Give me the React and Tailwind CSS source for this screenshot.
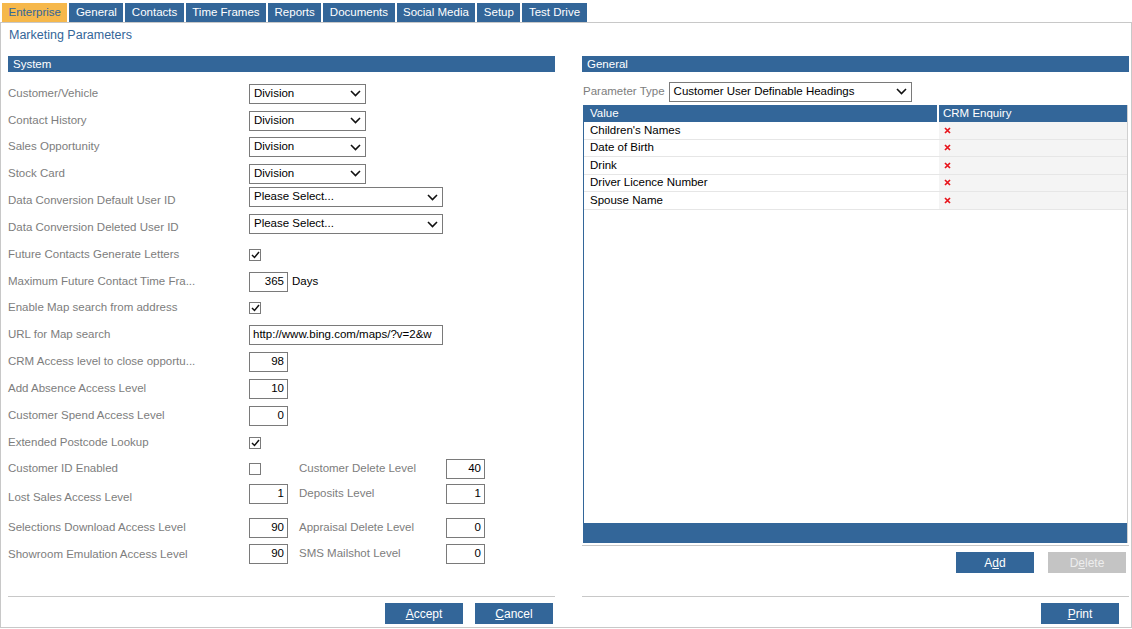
import { Fragment } from 'react'

const tabs = ['Enterprise', 'General', 'Contacts', 'Time Frames', 'Reports', 'Documents', 'Social Media', 'Setup', 'Test Drive']

const rows = [
  { label: 'Customer/Vehicle', kind: 'select', value: 'Division', h: 'h-[27px]' },
  { label: 'Contact History', kind: 'select', value: 'Division', h: 'h-[27px]' },
  { label: 'Sales Opportunity', kind: 'select', value: 'Division', h: 'h-[26px]' },
  { label: 'Stock Card', kind: 'select', value: 'Division', h: 'h-[27px]' },
  { label: 'Data Conversion Default User ID', kind: 'wide', value: 'Please Select...', h: 'h-[27px]', up: true },
  { label: 'Data Conversion Deleted User ID', kind: 'wide', value: 'Please Select...', h: 'h-[27px]', up: true },
  { label: 'Future Contacts Generate Letters', kind: 'check', checked: true, h: 'h-[27px]' },
  { label: 'Maximum Future Contact Time Fra...', kind: 'days', value: '365', h: 'h-[27px]' },
  { label: 'Enable Map search from address', kind: 'check', checked: true, h: 'h-[26px]' },
  { label: 'URL for Map search', kind: 'url', value: 'http://www.bing.com/maps/?v=2&w', h: 'h-[27px]' },
  { label: 'CRM Access level to close opportu...', kind: 'num', value: '98', h: 'h-[27px]' },
  { label: 'Add Absence Access Level', kind: 'num', value: '10', h: 'h-[27px]' },
  { label: 'Customer Spend Access Level', kind: 'num', value: '0', h: 'h-[27px]' },
  { label: 'Extended Postcode Lookup', kind: 'check', checked: true, h: 'h-[27px]' },
]

const pairRows = [
  { label: 'Customer ID Enabled', kind: 'check', checked: false, label2: 'Customer Delete Level', value2: '40', h: 'h-[25px]', lp: '' },
  { label: 'Lost Sales Access Level', kind: 'num', value: '1', label2: 'Deposits Level', value2: '1', h: 'h-[26px]', lp: 'pt-[8px]' },
  { label: 'Selections Download Access Level', kind: 'num', value: '90', label2: 'Appraisal Delete Level', value2: '0', h: 'h-[27px] mt-[7px]', lp: 'pt-[1px]' },
  { label: 'Showroom Emulation Access Level', kind: 'num', value: '90', label2: 'SMS Mailshot Level', value2: '0', h: 'h-[25px]', lp: 'pt-[3px]' },
]

const values = ["Children's Names", 'Date of Birth', 'Drink', 'Driver Licence Number', 'Spouse Name']

function Chevron() {
  return (
    <svg width="11" height="7" viewBox="0 0 11 7" className="shrink-0">
      <path d="M1 1 L5.5 5.5 L10 1" fill="none" stroke="#111" strokeWidth="1.6" />
    </svg>
  )
}

function Select({ value, width }) {
  return (
    <div className={`${width} h-[20px] border border-[#7a7a7a] bg-white flex items-center justify-between pl-[4px] pr-[4px] text-black`}>
      <span className="leading-none">{value}</span>
      <Chevron />
    </div>
  )
}

function Check({ checked }) {
  return (
    <div className="w-[12px] h-[12px] border border-[#7a7a7a] bg-white flex items-center justify-center">
      {checked && (
        <svg width="9" height="8" viewBox="0 0 9 8">
          <path d="M1 4 L3.5 6.5 L8 1" fill="none" stroke="#111" strokeWidth="1.5" />
        </svg>
      )}
    </div>
  )
}

function Num({ value }) {
  return (
    <div className="w-[39px] h-[20px] border border-[#7a7a7a] bg-white flex items-center justify-end pr-[3px] text-black leading-none">
      {value}
    </div>
  )
}

function Control({ row }) {
  if (row.kind === 'select') return <Select value={row.value} width="w-[117px]" />
  if (row.kind === 'wide') return <Select value={row.value} width="w-[194px]" />
  if (row.kind === 'check') return <Check checked={row.checked} />
  if (row.kind === 'num') return <Num value={row.value} />
  if (row.kind === 'days')
    return (
      <div className="flex items-center gap-[4px]">
        <Num value={row.value} />
        <span className="text-black">Days</span>
      </div>
    )
  return (
    <div className="w-[194px] h-[20px] border border-[#7a7a7a] bg-white flex items-center pl-[3px] text-black leading-none whitespace-nowrap">
      {row.value}
    </div>
  )
}

function Button({ children, className = 'bg-[#336699] text-white' }) {
  return (
    <button className={`w-[78px] h-[21px] ${className} text-[12px] leading-none flex items-center justify-center`}>
      {children}
    </button>
  )
}

function RedX() {
  return (
    <svg width="7" height="7" viewBox="0 0 7 7">
      <path d="M1 1 L6 6 M6 1 L1 6" stroke="#e8141b" strokeWidth="1.7" />
    </svg>
  )
}

export default function App() {
  return (
    <div className="w-[1132px] h-[629px] bg-white font-['Liberation_Sans',Arial,sans-serif] text-[11.5px] overflow-hidden">
      <div className="flex h-[22px] pt-[3px] pl-[2px] gap-[2px]">
        {tabs.map((tab, i) => (
          <div
            key={tab}
            className={`h-[19px] px-[6.5px] pt-[1px] flex items-center leading-none ${i === 0 ? 'bg-[#f6b84b] text-[#336699]' : 'bg-[#336699] text-white'}`}
          >
            {tab}
          </div>
        ))}
      </div>

      <div className="h-[606px] border border-[#c8c8c8] pl-[7px] pr-[1px]">
        <div className="h-[33px] pt-[4px] pl-[1px] text-[12.5px] text-[#336699] leading-[16px]">Marketing Parameters</div>

        <div className="flex gap-[27px]">
          {/* left column */}
          <div className="w-[547px] flex flex-col">
            <div className="h-[16px] bg-[#336699] text-white pl-[5px] leading-[16px]">System</div>
            <div className="mt-[8px] flex flex-col">
              {rows.map((row) => (
                <div key={row.label} className={`${row.h} flex items-center`}>
                  <div className="w-[241px] text-[#7d7d7d] whitespace-nowrap">{row.label}</div>
                  <div className={row.up ? 'pb-[7px]' : ''}>
                    <Control row={row} />
                  </div>
                </div>
              ))}
              {pairRows.map((row) => (
                <div key={row.label} className={`${row.h} flex items-center`}>
                  <div className={`w-[241px] text-[#7d7d7d] whitespace-nowrap ${row.lp}`}>{row.label}</div>
                  <div className="w-[50px] flex items-center">
                    <Control row={row} />
                  </div>
                  <div className="w-[147px] text-[#7d7d7d] whitespace-nowrap">{row.label2}</div>
                  <Num value={row.value2} />
                </div>
              ))}
            </div>
            <div className="mt-[30px] border-t border-[#c8c8c8]" />
            <div className="mt-[6px] flex justify-end gap-[12px] pr-[2px]">
              <Button>
                <span className="underline">A</span>ccept
              </Button>
              <Button>
                <span className="underline">C</span>ancel
              </Button>
            </div>
          </div>

          {/* right column */}
          <div className="w-[547px] flex flex-col">
            <div className="h-[16px] bg-[#336699] text-white pl-[5px] leading-[16px]">General</div>
            <div className="mt-[9px] h-[21px] flex items-center gap-[4px] pl-[1px]">
              <span className="text-[#7d7d7d]">Parameter Type</span>
              <Select value="Customer User Definable Headings" width="w-[243px]" />
            </div>
            <div className="mt-[3px] ml-[1px] w-[545px] h-[438px] flex flex-col border-l border-[#336699] border-r border-r-[#d0d0d0]">
              <div className="h-[17px] flex bg-[#336699] text-white">
                <div className="w-[353px] pl-[6px] leading-[17px]">Value</div>
                <div className="w-[2px] bg-white" />
                <div className="flex-1 pl-[4px] leading-[17px]">CRM Enquiry</div>
              </div>
              <div className="flex-1 bg-white">
                {values.map((v) => (
                  <Fragment key={v}>
                    <div className="h-[17.5px] flex border-b border-[#e6e6e6]">
                      <div className="w-[353px] pl-[6px] text-black flex items-center">{v}</div>
                      <div className="flex-1 bg-[#f4f4f4] border-l-2 border-white flex items-center pl-[5px]">
                        <RedX />
                      </div>
                    </div>
                  </Fragment>
                ))}
              </div>
              <div className="h-[20px] bg-[#336699]" />
            </div>
            <div className="mt-[2px] border-t border-[#c8c8c8]" />
            <div className="mt-[6px] flex justify-end gap-[14px] pr-[3px]">
              <Button>
                A<span className="underline">d</span>d
              </Button>
              <Button className="bg-[#c4c4c4] text-[#ededed]">
                D<span className="underline">e</span>lete
              </Button>
            </div>
            <div className="mt-[23px] border-t border-[#c8c8c8]" />
            <div className="mt-[6px] flex justify-end pr-[10px]">
              <Button>
                <span className="underline">P</span>rint
              </Button>
            </div>
          </div>
        </div>
      </div>
    </div>
  )
}
